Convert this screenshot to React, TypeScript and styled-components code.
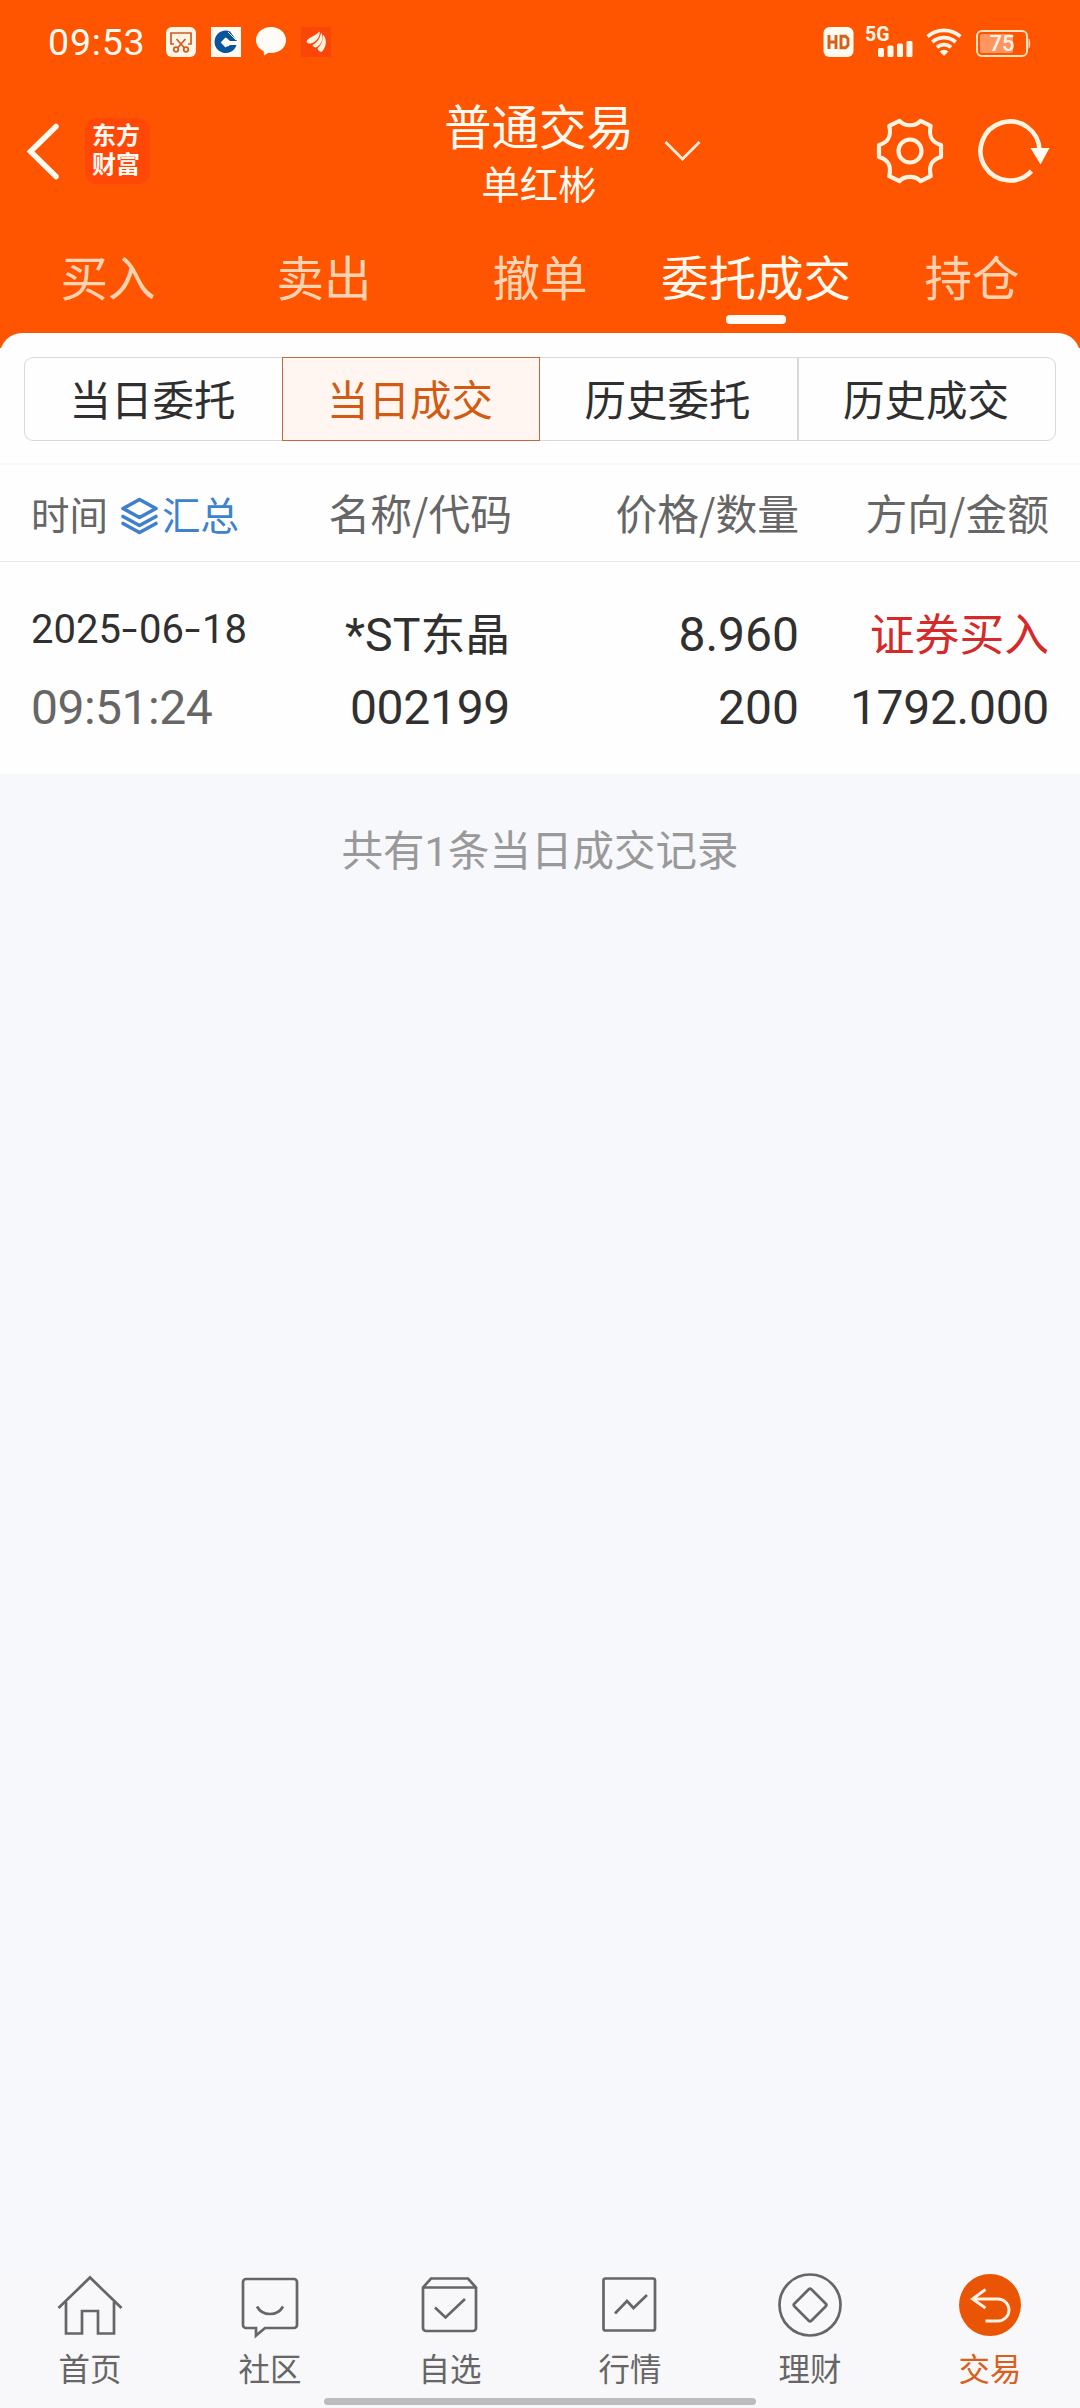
import React from "react";
import styled, { createGlobalStyle } from "styled-components";

const CJK = `"Noto Sans CJK SC", "Noto Sans", sans-serif`;
const LATIN = `Roboto, "Noto Sans CJK SC", sans-serif`;

const Global = createGlobalStyle`
  * { box-sizing: border-box; }
  body { margin: 0; background: #f7f8fb; font-family: ${CJK}; }
  svg { display: block; flex: none; overflow: visible; }
`;

const Screen = styled.div`
  width: 1080px;
  height: 2408px;
  display: flex;
  flex-direction: column;
  overflow: hidden;
  background: #f7f8fb;
`;

const Header = styled.header`
  height: 348px;
  flex: none;
  background: #ff5500;
  color: #fffaf2;
`;

const StatusBar = styled.div`
  height: 84px;
  padding: 0 46px 0 48px;
  display: flex;
  align-items: center;
  justify-content: space-between;
`;

const StatusGroup = styled.div<{ $gap: number }>`
  display: flex;
  align-items: center;
  gap: ${(p) => p.$gap}px;
`;

const Clock = styled.span`
  width: 103px;
  font: 400 37.5px/42px ${LATIN};
  letter-spacing: 0.8px;
  white-space: nowrap;
`;

const NavBar = styled.div`
  height: 134px;
  padding: 0 30px 0 26px;
  display: grid;
  grid-template-columns: 418px 1fr 174px;
  align-items: center;
`;

const NavStart = styled.div`
  display: flex;
  align-items: center;
  gap: 24px;
`;

const AppBadge = styled.div`
  width: 65px;
  height: 66px;
  border-radius: 12px;
  background: #ff4708;
  display: flex;
  flex-direction: column;
  align-items: center;
  justify-content: center;
  font-family: ${LATIN};
  font-size: 24px;
  font-weight: 700;
  line-height: 29px;
  padding: 0 3px 0 0;
`;

const TitleBlock = styled.button`
  border: 0;
  padding: 0;
  background: none;
  color: inherit;
  font-family: inherit;
  display: flex;
  align-items: center;
  justify-content: flex-start;
  gap: 30px;
`;

const Titles = styled.span`
  display: flex;
  flex-direction: column;
  align-items: center;
  padding-top: 3px;
`;

const Title = styled.span`
  font-size: 47.5px;
  line-height: 60px;
`;

const Account = styled.span`
  font-size: 38.5px;
  line-height: 55px;
`;

const NavActions = styled.div`
  display: flex;
  align-items: center;
  justify-content: flex-end;
  gap: 34px;
`;

const Tabs = styled.nav`
  height: 115px;
  display: grid;
  grid-template-columns: repeat(5, 1fr);
`;

const Tab = styled.a<{ $active?: boolean }>`
  display: flex;
  flex-direction: column;
  align-items: center;
  padding-top: 23px;
  font-size: 47.5px;
  line-height: 70px;
  white-space: nowrap;
  color: ${(p) => (p.$active ? "#fffaf0" : "#ffd3b2")};
  &::after {
    content: "";
    width: 60px;
    height: 9px;
    margin-top: 4px;
    border-radius: 4px;
    background: ${(p) => (p.$active ? "#fffcf8" : "transparent")};
  }
`;

const Panel = styled.section`
  margin-top: -15px;
  height: 441px;
  flex: none;
  background: #fefefe;
  border-radius: 22px 22px 0 0;
`;

const SegmentWrap = styled.div`
  height: 132px;
  padding: 24px 24px 23px;
  border-bottom: 2px solid #f9f9f8;
`;

const Segments = styled.div`
  height: 84px;
  display: grid;
  grid-template-columns: repeat(4, 1fr);
`;

const Segment = styled.button<{ $active?: boolean }>`
  font: 400 41.5px/60px ${CJK};
  padding: 0 2px 3px 0;
  white-space: nowrap;
  color: ${(p) => (p.$active ? "#d35a12" : "#2f2f2f")};
  background: ${(p) => (p.$active ? "#fff6f1" : "#fefefe")};
  border: 1px solid ${(p) => (p.$active ? "#c4673a" : "#d8d8d8")};
  &:first-child { border-radius: 9px 0 0 9px; border-right: 0; }
  &:last-child { border-radius: 0 9px 9px 0; }
  &:nth-child(3) { border-left: 0; }
`;

const ROW_COLUMNS = `
  display: grid;
  grid-template-columns: 226px 255px 287px 250px;
  padding: 0 31px 0 31px;
`;

const TableHead = styled.div`
  ${ROW_COLUMNS}
  height: 97px;
  align-items: center;
  border-bottom: 1px solid #e8e8ea;
  color: #666;
`;

const HeadCell = styled.div`
  text-align: right;
  font-size: 41.8px;
  line-height: 60px;
  padding-bottom: 2px;
  white-space: nowrap;
`;

const TimeHead = styled.div`
  display: flex;
  align-items: center;
  font-size: 38.5px;
  line-height: 56px;
  white-space: nowrap;
`;

const Summary = styled.button`
  display: flex;
  align-items: center;
  gap: 4px;
  margin-left: 13px;
  border: 0;
  padding: 0;
  background: none;
  font: inherit;
  color: #3d82cc;
  & > svg { margin-top: 5px; }
`;

const Record = styled.div`
  ${ROW_COLUMNS}
  padding-top: 36px;
  color: #303030;
`;

const Cell = styled.div<{ $start?: boolean; $inset?: number }>`
  display: flex;
  flex-direction: column;
  align-items: ${(p) => (p.$start ? "flex-start" : "flex-end")};
  padding-right: ${(p) => p.$inset ?? 0}px;
  white-space: nowrap;
`;

const Value = styled.div<{ $muted?: boolean; $spacing?: number }>`
  font: 400 48px/73px ${LATIN};
  height: 73px;
  letter-spacing: ${(p) => p.$spacing ?? 0}px;
  color: ${(p) => (p.$muted ? "#666" : "inherit")};
`;

const DateText = styled.div`
  font: 400 40px/73px ${LATIN};
  height: 73px;
  margin-top: -5px;
  margin-bottom: 5px;
`;

const Dash = styled.span`
  display: inline-block;
  transform: scaleX(1.4);
  margin: 0 3.5px;
`;

const StPrefix = styled.span`
  font-size: 46.5px;
`;

const Han = styled.span<{ $red?: boolean }>`
  font-family: ${CJK};
  font-size: 44.8px;
  line-height: 1;
  color: ${(p) => (p.$red ? "#d42a2a" : "inherit")};
`;

const EmptyNote = styled.p`
  flex: 1;
  margin: 0;
  padding-top: 48px;
  text-align: center;
  font-family: ${LATIN};
  font-size: 41.5px;
  line-height: 60px;
  color: #999;
`;

const BottomNav = styled.nav`
  height: 135px;
  flex: none;
  display: grid;
  grid-template-columns: repeat(6, 1fr);
  background: #f8f8fa;
`;

const NavItem = styled.a<{ $active?: boolean }>`
  display: flex;
  flex-direction: column;
  align-items: center;
  font-size: 31.5px;
  line-height: 44px;
  gap: 6px;
  color: ${(p) => (p.$active ? "#d9601c" : "#666")};
`;

const HomeIndicator = styled.div`
  width: 432px;
  height: 7px;
  flex: none;
  margin: -10px auto 3px;
  border-radius: 4px;
  background: #bcbcbe;
`;

const navIcons: Record<string, React.ReactNode> = {
  首页: (
    <>
      <path d="M3.5 35 35 4.5 66.5 35" />
      <path d="M11 29v31.500h16V38h16v22.500h16V29" />
    </>
  ),
  社区: (
    <>
      <path d="M11 6h48a3 3 0 0 1 3 3v43a3 3 0 0 1-3 3H30l-9 7.500V55h-10a3 3 0 0 1-3-3V9a3 3 0 0 1 3-3Z" />
      <path d="M22 33.500c5.500 10 20.500 10 26 0" />
    </>
  ),
  自选: (
    <>
      <path d="M16 5.500h37l8 9V55a3 3 0 0 1-3 3H11a3 3 0 0 1-3-3V14.500Z" />
      <path d="M8 14.500h53M20 34.500l10.500 10L50 26" />
    </>
  ),
  行情: (
    <>
      <rect x="8.500" y="5.500" width="51.500" height="52" rx="2" />
      <path d="m20 40.500 12-12.500 6.500 7L52 22" />
    </>
  ),
  理财: (
    <>
      <circle cx="35" cy="32" r="30.500" />
      <path d="M33.800 16.300a1.800 1.800 0 0 1 2.500 0l14.500 14.500a1.800 1.800 0 0 1 0 2.500l-14.500 14.500a1.800 1.800 0 0 1-2.500 0l-14.500-14.500a1.800 1.800 0 0 1 0-2.500Z" />
    </>
  ),
  交易: (
    <>
      <circle cx="35" cy="32" r="31" fill="#e95504" stroke="none" />
      <g stroke="#fff1e4" strokeWidth="2.900">
        <path d="M30.500 16.500 17.500 26l13 9" />
        <path d="M18 26h25a11 11 0 0 1 0 22H30.500" />
      </g>
    </>
  ),
};

const tabs = ["买入", "卖出", "撤单", "委托成交", "持仓"];
const segments = ["当日委托", "当日成交", "历史委托", "历史成交"];

const ScissorIcon = () => (
  <svg width="30" height="30" viewBox="0 0 30 30">
    <rect width="30" height="30" rx="6" fill="#fff6e8" />
    <g fill="none" stroke="#cf5a22" strokeWidth="1.700">
      <path d="M8 17H5V6h20v11h-3M10.500 12l8 9M19.500 12l-8 9" />
      <circle cx="10" cy="22.500" r="2.300" />
      <circle cx="20" cy="22.500" r="2.300" />
    </g>
  </svg>
);

const BankIcon = () => (
  <svg width="30" height="30" viewBox="0 0 30 30">
    <rect width="30" height="30" fill="#fffaf2" />
    <path d="M19 4.500A11.200 11.200 0 1 0 25.500 18H19a5 5 0 0 1-4 1.500l-4.500-4.500 4.500-4.500 4 3.500h7z" fill="#08559c" />
    <path d="M14.500 10.500 19.500 15.500 14.500 20.500 9.700 15.500Z" fill="#fffaf2" />
    <path d="m17 5 8 8" stroke="#fffaf2" strokeWidth="1" />
  </svg>
);

const BubbleIcon = () => (
  <svg width="30" height="30" viewBox="0 0 30 30">
    <path d="M15 0c8.300 0 15 5.800 15 13.300S23.300 26 15 26l-2.500-.2L8 28.500l-.3-4.200C3.200 22 0 18 0 13.300 0 5.800 6.700 0 15 0Z" fill="#fffcf8" />
  </svg>
);

const WingIcon = () => (
  <svg width="30" height="30" viewBox="0 0 30 30">
    <rect width="30" height="30" rx="2" fill="#fb4609" />
    <g fill="#fff3e0">
      <path d="M5.500 14.500C7 10.500 13 10 18.500 4.500 19.500 9.500 15 15.500 9.500 16.500 7.500 16.700 6 16 5.500 14.500Z" />
      <path d="M11.500 18C16.500 15.500 19.500 10.500 20 5.500 23.500 10.500 20.500 17.500 15.500 20.300 13.500 20.800 12 19.700 11.500 18Z" />
      <path d="M16.500 21.500C20.500 18 22.300 12.500 21.800 7.500 26.500 12 25.500 20.500 20.500 25 18.300 24.500 17 23.500 16.500 21.500Z" />
    </g>
  </svg>
);

const HdIcon = () => (
  <svg width="30" height="30" viewBox="-1.500 0 30 30">
    <rect width="30" height="30" rx="6" fill="#fffaf0" />
    <path d="M5.500 8v14M12.500 8v14M5.500 15h7M17.500 9.300h4.500l2.500 2.500v6.400L22 20.700h-4.500Z" fill="none" stroke="#d4601c" strokeWidth="2.900" />
  </svg>
);

const SignalIcon = () => (
  <svg width="50" height="30" viewBox="-1 0 50 30">
    <text x="0" y="14" fontFamily="Roboto, sans-serif" fontSize="19.500" fontWeight="700" fill="#fff6ea">5G</text>
    <g fill="#fff8ee">
      <rect x="13" y="21" width="6" height="9" rx="1.500" />
      <rect x="22.500" y="18.500" width="6" height="11.500" rx="1.500" />
      <rect x="32" y="16.500" width="6" height="13.500" rx="1.500" />
      <rect x="41.500" y="14" width="6" height="16" rx="1.500" />
    </g>
  </svg>
);

const WifiIcon = () => (
  <svg width="36" height="30" viewBox="0 0 36 30">
    <g fill="none" stroke="#fff6ea" strokeWidth="3.700">
      <path d="M1.500 9.500a25 25 0 0 1 33 0" />
      <path d="M6.300 15a17.600 17.600 0 0 1 23.400 0" />
      <path d="M11 20.300a10.500 10.500 0 0 1 14 0" />
    </g>
    <path d="m18 29-4.300-4.500a6.200 6.200 0 0 1 8.600 0Z" fill="#fff6ea" />
  </svg>
);

const BatteryIcon = () => (
  <svg width="60" height="30" viewBox="-2 0 60 30">
    <rect x="1" y="4" width="50" height="25" rx="5" fill="none" stroke="#ffe3bf" strokeWidth="2" />
    <path d="M52.500 11.500c2.300.5 2.300 9.500 0 10Z" fill="#ffe3bf" />
    <rect x="4" y="7" width="33" height="19" rx="2" fill="#ff9662" />
    <text x="26" y="24.300" textAnchor="middle" fontFamily="Roboto, sans-serif" fontSize="22" fontWeight="500" fill="#fff3e4">75</text>
  </svg>
);

const GearIcon = () => (
  <svg width="68" height="68" viewBox="-34 -34 68 68" fill="none" stroke="#fff3e2" strokeWidth="4.200" strokeLinejoin="round">
    <path d="M-10.500-30.200C-6-24.300 6-24.300 10.500-30.200L20.700-25.200C18.500-15 21-9 31-6V6C21 9 18.500 15 20.700 25.200L10.500 30.200C6 24.300-6 24.300-10.500 30.200L-20.700 25.200C-18.500 15-21 9-31 6V-6C-21-9-18.500-15-20.700-25.200Z" />
    <circle r="11.500" />
  </svg>
);

const RefreshIcon = () => (
  <svg width="72" height="68" viewBox="-32 -34 72 68">
    <path d="M29.500-1A29.500 29.500 0 1 0 21.500 20.200" fill="none" stroke="#fff3e2" strokeWidth="4.600" />
    <path d="M20.500-3h19L30.500 13.500Z" fill="#fffaf2" />
  </svg>
);

export default function App() {
  return (
    <Screen>
      <Global />
      <Header>
        <StatusBar>
          <StatusGroup $gap={15}>
            <Clock>09:53</Clock>
            <ScissorIcon />
            <BankIcon />
            <BubbleIcon />
            <WingIcon />
          </StatusGroup>
          <StatusGroup $gap={12}>
            <HdIcon />
            <SignalIcon />
            <WifiIcon />
            <BatteryIcon />
          </StatusGroup>
        </StatusBar>
        <NavBar>
          <NavStart>
            <svg width="35" height="58" viewBox="0 0 35 58" fill="none" stroke="#fffaf2" strokeWidth="5.500" strokeLinecap="round">
              <path d="M30 4.500 4.500 29.500 30 54.500" />
            </svg>
            <AppBadge>
              <span>东方</span>
              <span>财富</span>
            </AppBadge>
          </NavStart>
          <TitleBlock>
            <Titles>
              <Title>普通交易</Title>
              <Account>单红彬</Account>
            </Titles>
            <svg width="37" height="22" viewBox="0 0 37 22" fill="none" stroke="#ffeedb" strokeWidth="2.800">
              <path d="m1.500 2 17 17 17-17" />
            </svg>
          </TitleBlock>
          <NavActions>
            <GearIcon />
            <RefreshIcon />
          </NavActions>
        </NavBar>
        <Tabs>
          {tabs.map((t) => (
            <Tab key={t} $active={t === "委托成交"}>{t}</Tab>
          ))}
        </Tabs>
      </Header>
      <Panel>
        <SegmentWrap>
          <Segments>
            {segments.map((s) => (
              <Segment key={s} $active={s === "当日成交"}>{s}</Segment>
            ))}
          </Segments>
        </SegmentWrap>
        <TableHead>
          <TimeHead>
            时间
            <Summary>
              <svg width="37" height="38" viewBox="0 0 37 38" fill="none" stroke="#3f7fcb" strokeWidth="3.600" strokeLinejoin="round" strokeLinecap="round">
                <path d="M18.500 2.500 35 11.500 18.500 20.500 2 11.500Z" />
                <path d="m2 19.500 16.500 9 16.500-9M2 26.500l16.500 9 16.500-9" />
              </svg>
              汇总
            </Summary>
          </TimeHead>
          <HeadCell>名称/代码</HeadCell>
          <HeadCell>价格/数量</HeadCell>
          <HeadCell>方向/金额</HeadCell>
        </TableHead>
        <Record>
          <Cell $start>
            <DateText>2025<Dash>-</Dash>06<Dash>-</Dash>18</DateText>
            <Value $muted $spacing={-0.5}>09:51:24</Value>
          </Cell>
          <Cell $inset={2}>
            <Value><StPrefix>*ST</StPrefix><Han>东晶</Han></Value>
            <Value $spacing={-0.3}>002199</Value>
          </Cell>
          <Cell>
            <Value>8.960</Value>
            <Value>200</Value>
          </Cell>
          <Cell>
            <Value><Han $red>证券买入</Han></Value>
            <Value $spacing={-0.3}>1792.000</Value>
          </Cell>
        </Record>
      </Panel>
      <EmptyNote>共有1条当日成交记录</EmptyNote>
      <BottomNav>
        {Object.entries(navIcons).map(([label, icon]) => (
          <NavItem key={label} $active={label === "交易"}>
            <svg width="70" height="66" viewBox="0 0 70 66" fill="none" stroke="#666" strokeWidth="2.700">
              {icon}
            </svg>
            {label}
          </NavItem>
        ))}
      </BottomNav>
      <HomeIndicator />
    </Screen>
  );
}
